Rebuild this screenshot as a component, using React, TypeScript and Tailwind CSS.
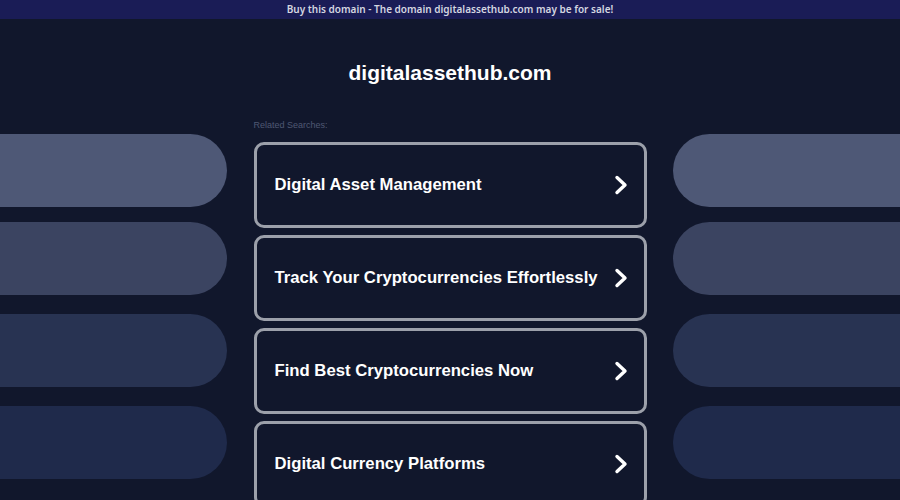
import React from "react";

const pills = [
  "bg-[#4e5876]",
  "bg-[#3b4461] mt-[15px]",
  "bg-[#283352] mt-[19px]",
  "bg-[#1f2a4b] mt-[19px]",
];
const items = [
  "Digital Asset Management",
  "Track Your Cryptocurrencies Effortlessly",
  "Find Best Cryptocurrencies Now",
  "Digital Currency Platforms",
];

function Chevron() {
  return (
    <svg width="14" height="20" viewBox="0 0 14 20" fill="none" className="shrink-0">
      <polyline
        points="3,2.5 11,10 3,17.5"
        stroke="#ffffff"
        strokeWidth="3.4"
        strokeLinecap="round"
        strokeLinejoin="round"
      />
    </svg>
  );
}

function Side({ left }: { left: boolean }) {
  return (
    <div className="flex flex-col pt-[14px]">
      {pills.map((c, i) => (
        <div
          key={i}
          className={`h-[73px] ${c} ${left ? "rounded-r-[37px]" : "rounded-l-[37px]"}`}
        />
      ))}
    </div>
  );
}

export default function App() {
  return (
    <div className="w-[900px] h-[500px] overflow-hidden bg-[#11172c] font-['Liberation_Sans',Arial,sans-serif]">
      <div className="h-[19px] bg-[#1a1c56] flex items-center justify-center text-[10px] font-semibold text-[#d4d6e0] font-['Noto_Sans',sans-serif]">
        Buy this domain - The domain digitalassethub.com may be for sale!
      </div>
      <div className="pt-[40px] h-[101px] text-center text-white font-bold text-[21px] leading-[28px]">
        digitalassethub.com
      </div>
      <div className="grid grid-cols-[227px_393px_227px] gap-x-[26.5px]">
        <Side left={true} />
        <div className="flex flex-col">
          <div className="h-[22px] text-[9px] leading-[10px] text-[#4f5873]">
            Related Searches:
          </div>
          <div className="flex flex-col gap-[7px]">
            {items.map((t) => (
              <div
                key={t}
                className="h-[86px] border-[3px] border-[#9ca0aa] rounded-[10px] flex items-center justify-between pl-[18px] pr-[16px]"
              >
                <span className="text-white font-bold text-[16.7px]">{t}</span>
                <Chevron />
              </div>
            ))}
          </div>
        </div>
        <Side left={false} />
      </div>
    </div>
  );
}
